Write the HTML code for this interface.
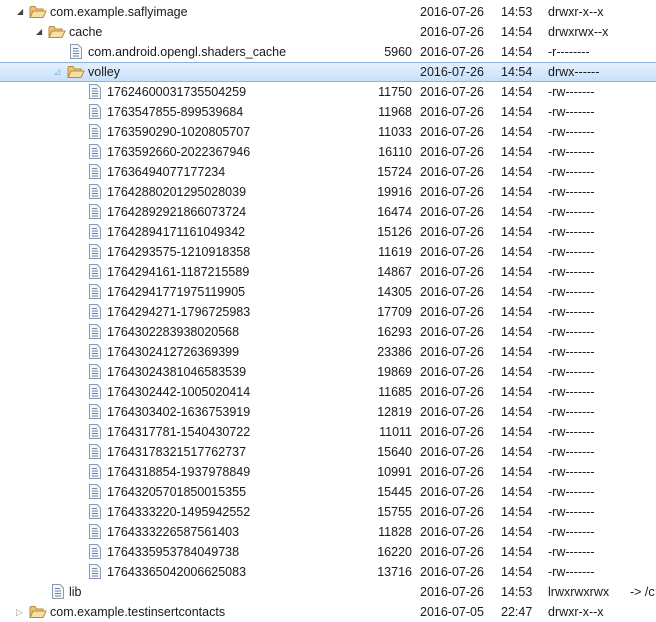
<!DOCTYPE html>
<html><head><meta charset="utf-8">
<style>
html,body{margin:0;padding:0;background:#fff;width:656px;height:622px;overflow:hidden;font-family:"Liberation Sans",Arial,sans-serif;font-size:12.5px;color:#1a1a1a;}
.r{position:absolute;left:0;width:656px;height:20px;line-height:20px;white-space:nowrap;}
.r span{position:absolute;top:0;}
.sel{background:linear-gradient(#e4f0fd,#c9e0fb);border-top:1px solid #8fb2dc;border-bottom:1px solid #8fb2dc;height:18px;line-height:18px;}
.sz{right:244px;text-align:right;}
.dt{left:420px}.tm{left:501px}.pm{left:548px}
svg.i{position:absolute;}
</style></head><body>
<svg width="0" height="0" style="position:absolute">
<defs>
<symbol id="fo" viewBox="0 0 18 14"><path d="M1 2.5 L1 12.5 L14 12.5 L14 4 L7.5 4 L6 1.5 L1.8 1.5Z" fill="#e9c47a" stroke="#b98a3c" stroke-width="1"/><path d="M1 12.5 L4 6 L17 6 L14 12.5Z" fill="#f8dfa3" stroke="#b98a3c" stroke-width="1"/></symbol>
<symbol id="fi" viewBox="0 0 12 15"><path d="M0.5 0.5 L8 0.5 L11.5 4 L11.5 14.5 L0.5 14.5Z" fill="#f4f6fa" stroke="#8a9bb0"/><path d="M3 4.5h5M3 7h6M3 9.5h6M3 12h6" stroke="#6d86a8" stroke-width="1"/></symbol>
</defs></svg>

<div class="r" style="top:2px"><span style="left:17px;font-size:8px;color:#444">◢</span><svg class="i" style="left:29px;top:3px" width="18" height="14"><use href="#fo"/></svg><span style="left:50px">com.example.saflyimage</span><span class="dt">2016-07-26</span><span class="tm">14:53</span><span class="pm">drwxr-x--x</span></div>
<div class="r" style="top:22px"><span style="left:36px;font-size:8px;color:#444">◢</span><svg class="i" style="left:48px;top:3px" width="18" height="14"><use href="#fo"/></svg><span style="left:69px">cache</span><span class="dt">2016-07-26</span><span class="tm">14:54</span><span class="pm">drwxrwx--x</span></div>
<div class="r" style="top:42px"><svg class="i" style="left:70px;top:2px" width="12" height="15"><use href="#fi"/></svg><span style="left:88px">com.android.opengl.shaders_cache</span><span class="sz">5960</span><span class="dt">2016-07-26</span><span class="tm">14:54</span><span class="pm">-r--------</span></div>
<div class="r sel" style="top:62px"><span style="left:54px;font-size:8px;color:#4fb3e8">◿</span><svg class="i" style="left:67px;top:2px" width="18" height="14"><use href="#fo"/></svg><span style="left:88px">volley</span><span class="dt">2016-07-26</span><span class="tm">14:54</span><span class="pm">drwx------</span></div>

<div class="r" style="top:82px"><svg class="i" style="left:89px;top:2px" width="12" height="15"><use href="#fi"/></svg><span style="left:107px">17624600031735504259</span><span class="sz">11750</span><span class="dt">2016-07-26</span><span class="tm">14:54</span><span class="pm">-rw-------</span></div>
<div class="r" style="top:102px"><svg class="i" style="left:89px;top:2px" width="12" height="15"><use href="#fi"/></svg><span style="left:107px">1763547855-899539684</span><span class="sz">11968</span><span class="dt">2016-07-26</span><span class="tm">14:54</span><span class="pm">-rw-------</span></div>
<div class="r" style="top:122px"><svg class="i" style="left:89px;top:2px" width="12" height="15"><use href="#fi"/></svg><span style="left:107px">1763590290-1020805707</span><span class="sz">11033</span><span class="dt">2016-07-26</span><span class="tm">14:54</span><span class="pm">-rw-------</span></div>
<div class="r" style="top:142px"><svg class="i" style="left:89px;top:2px" width="12" height="15"><use href="#fi"/></svg><span style="left:107px">1763592660-2022367946</span><span class="sz">16110</span><span class="dt">2016-07-26</span><span class="tm">14:54</span><span class="pm">-rw-------</span></div>
<div class="r" style="top:162px"><svg class="i" style="left:89px;top:2px" width="12" height="15"><use href="#fi"/></svg><span style="left:107px">17636494077177234</span><span class="sz">15724</span><span class="dt">2016-07-26</span><span class="tm">14:54</span><span class="pm">-rw-------</span></div>
<div class="r" style="top:182px"><svg class="i" style="left:89px;top:2px" width="12" height="15"><use href="#fi"/></svg><span style="left:107px">17642880201295028039</span><span class="sz">19916</span><span class="dt">2016-07-26</span><span class="tm">14:54</span><span class="pm">-rw-------</span></div>
<div class="r" style="top:202px"><svg class="i" style="left:89px;top:2px" width="12" height="15"><use href="#fi"/></svg><span style="left:107px">17642892921866073724</span><span class="sz">16474</span><span class="dt">2016-07-26</span><span class="tm">14:54</span><span class="pm">-rw-------</span></div>
<div class="r" style="top:222px"><svg class="i" style="left:89px;top:2px" width="12" height="15"><use href="#fi"/></svg><span style="left:107px">17642894171161049342</span><span class="sz">15126</span><span class="dt">2016-07-26</span><span class="tm">14:54</span><span class="pm">-rw-------</span></div>
<div class="r" style="top:242px"><svg class="i" style="left:89px;top:2px" width="12" height="15"><use href="#fi"/></svg><span style="left:107px">1764293575-1210918358</span><span class="sz">11619</span><span class="dt">2016-07-26</span><span class="tm">14:54</span><span class="pm">-rw-------</span></div>
<div class="r" style="top:262px"><svg class="i" style="left:89px;top:2px" width="12" height="15"><use href="#fi"/></svg><span style="left:107px">1764294161-1187215589</span><span class="sz">14867</span><span class="dt">2016-07-26</span><span class="tm">14:54</span><span class="pm">-rw-------</span></div>
<div class="r" style="top:282px"><svg class="i" style="left:89px;top:2px" width="12" height="15"><use href="#fi"/></svg><span style="left:107px">17642941771975119905</span><span class="sz">14305</span><span class="dt">2016-07-26</span><span class="tm">14:54</span><span class="pm">-rw-------</span></div>
<div class="r" style="top:302px"><svg class="i" style="left:89px;top:2px" width="12" height="15"><use href="#fi"/></svg><span style="left:107px">1764294271-1796725983</span><span class="sz">17709</span><span class="dt">2016-07-26</span><span class="tm">14:54</span><span class="pm">-rw-------</span></div>
<div class="r" style="top:322px"><svg class="i" style="left:89px;top:2px" width="12" height="15"><use href="#fi"/></svg><span style="left:107px">1764302283938020568</span><span class="sz">16293</span><span class="dt">2016-07-26</span><span class="tm">14:54</span><span class="pm">-rw-------</span></div>
<div class="r" style="top:342px"><svg class="i" style="left:89px;top:2px" width="12" height="15"><use href="#fi"/></svg><span style="left:107px">1764302412726369399</span><span class="sz">23386</span><span class="dt">2016-07-26</span><span class="tm">14:54</span><span class="pm">-rw-------</span></div>
<div class="r" style="top:362px"><svg class="i" style="left:89px;top:2px" width="12" height="15"><use href="#fi"/></svg><span style="left:107px">17643024381046583539</span><span class="sz">19869</span><span class="dt">2016-07-26</span><span class="tm">14:54</span><span class="pm">-rw-------</span></div>
<div class="r" style="top:382px"><svg class="i" style="left:89px;top:2px" width="12" height="15"><use href="#fi"/></svg><span style="left:107px">1764302442-1005020414</span><span class="sz">11685</span><span class="dt">2016-07-26</span><span class="tm">14:54</span><span class="pm">-rw-------</span></div>
<div class="r" style="top:402px"><svg class="i" style="left:89px;top:2px" width="12" height="15"><use href="#fi"/></svg><span style="left:107px">1764303402-1636753919</span><span class="sz">12819</span><span class="dt">2016-07-26</span><span class="tm">14:54</span><span class="pm">-rw-------</span></div>
<div class="r" style="top:422px"><svg class="i" style="left:89px;top:2px" width="12" height="15"><use href="#fi"/></svg><span style="left:107px">1764317781-1540430722</span><span class="sz">11011</span><span class="dt">2016-07-26</span><span class="tm">14:54</span><span class="pm">-rw-------</span></div>
<div class="r" style="top:442px"><svg class="i" style="left:89px;top:2px" width="12" height="15"><use href="#fi"/></svg><span style="left:107px">17643178321517762737</span><span class="sz">15640</span><span class="dt">2016-07-26</span><span class="tm">14:54</span><span class="pm">-rw-------</span></div>
<div class="r" style="top:462px"><svg class="i" style="left:89px;top:2px" width="12" height="15"><use href="#fi"/></svg><span style="left:107px">1764318854-1937978849</span><span class="sz">10991</span><span class="dt">2016-07-26</span><span class="tm">14:54</span><span class="pm">-rw-------</span></div>
<div class="r" style="top:482px"><svg class="i" style="left:89px;top:2px" width="12" height="15"><use href="#fi"/></svg><span style="left:107px">17643205701850015355</span><span class="sz">15445</span><span class="dt">2016-07-26</span><span class="tm">14:54</span><span class="pm">-rw-------</span></div>
<div class="r" style="top:502px"><svg class="i" style="left:89px;top:2px" width="12" height="15"><use href="#fi"/></svg><span style="left:107px">1764333220-1495942552</span><span class="sz">15755</span><span class="dt">2016-07-26</span><span class="tm">14:54</span><span class="pm">-rw-------</span></div>
<div class="r" style="top:522px"><svg class="i" style="left:89px;top:2px" width="12" height="15"><use href="#fi"/></svg><span style="left:107px">1764333226587561403</span><span class="sz">11828</span><span class="dt">2016-07-26</span><span class="tm">14:54</span><span class="pm">-rw-------</span></div>
<div class="r" style="top:542px"><svg class="i" style="left:89px;top:2px" width="12" height="15"><use href="#fi"/></svg><span style="left:107px">1764335953784049738</span><span class="sz">16220</span><span class="dt">2016-07-26</span><span class="tm">14:54</span><span class="pm">-rw-------</span></div>
<div class="r" style="top:562px"><svg class="i" style="left:89px;top:2px" width="12" height="15"><use href="#fi"/></svg><span style="left:107px">17643365042006625083</span><span class="sz">13716</span><span class="dt">2016-07-26</span><span class="tm">14:54</span><span class="pm">-rw-------</span></div>

<div class="r" style="top:582px"><svg class="i" style="left:52px;top:2px" width="12" height="15"><use href="#fi"/></svg><span style="left:69px">lib</span><span class="dt">2016-07-26</span><span class="tm">14:53</span><span class="pm">lrwxrwxrwx</span><span style="left:630px">-&gt; /c</span></div>
<div class="r" style="top:602px"><span style="left:16px;font-size:9px;color:#999">▷</span><svg class="i" style="left:29px;top:3px" width="18" height="14"><use href="#fo"/></svg><span style="left:50px">com.example.testinsertcontacts</span><span class="dt">2016-07-05</span><span class="tm">22:47</span><span class="pm">drwxr-x--x</span></div>
</body></html>
